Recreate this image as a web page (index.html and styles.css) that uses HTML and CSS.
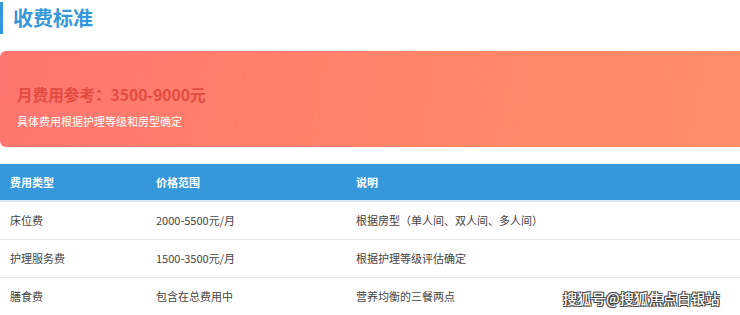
FILE: index.html
```html
<!DOCTYPE html>
<html lang="zh-CN">
<head>
<meta charset="utf-8">
<title>收费标准</title>
<link rel="stylesheet" href="styles.css">
</head>
<body>
<div class="page">
  <h2 class="section-title">收费标准</h2>
  <div class="price-card">
    <div class="price-main">月费用参考：3500-9000元</div>
    <div class="price-note">具体费用根据护理等级和房型确定</div>
  </div>
  <table class="fee-table">
    <colgroup>
      <col class="c1"><col class="c2"><col class="c3">
    </colgroup>
    <thead>
      <tr><th>费用类型</th><th>价格范围</th><th>说明</th></tr>
    </thead>
    <tbody>
      <tr><td>床位费</td><td>2000-5500元/月</td><td>根据房型（单人间、双人间、多人间）</td></tr>
      <tr><td>护理服务费</td><td>1500-3500元/月</td><td>根据护理等级评估确定</td></tr>
      <tr><td>膳食费</td><td>包含在总费用中</td><td>营养均衡的三餐两点</td></tr>
    </tbody>
  </table>
  <div class="watermark">搜狐号@搜狐焦点白银站</div>
</div>
</body>
</html>
```

FILE: styles.css
```css
* { box-sizing: border-box; }
html, body { margin: 0; padding: 0; background: #fff; }
body {
  font-family: "Noto Sans CJK SC", "Microsoft YaHei", sans-serif;
  color: #333;
  overflow: hidden;
}
.page { position: relative; width: 740px; height: 315px; overflow: hidden; }
.section-title {
  margin: 2px 0 0 0;
  padding-left: 10px;
  border-left: 3px solid #3498db;
  color: #3498db;
  font-size: 20px;
  font-weight: 700;
  line-height: 32px;
  height: 32px;
}
.price-card {
  margin-top: 17px;
  margin-right: -12px;
  height: 96px;
  border-radius: 6px;
  background: linear-gradient(100deg, #ff756f 0%, #ff8569 55%, #ff8e69 100%);
  padding: 31px 17px 0 17px;
}
.price-main {
  color: #e24b3f;
  font-size: 15.6px;
  font-weight: 700;
  line-height: 24px;
}
.price-note {
  margin-top: 7px;
  color: #fff;
  font-size: 11px;
  line-height: 16px;
}
.fee-table {
  margin-top: 17px;
  width: 740px;
  border-collapse: collapse;
  table-layout: fixed;
  font-size: 11px;
}
.c1 { width: 146px; }
.c2 { width: 200px; }
.fee-table th {
  background: #3498db;
  color: #fff;
  font-weight: 700;
  text-align: left;
  padding: 0 10px;
  height: 37px;
  border-bottom: 2px solid #d7e9f5;
}
.fee-table td {
  padding: 0 10px;
  height: 38px;
  color: #444;
  border-bottom: 1px solid #e8e8e8;
}
.watermark {
  position: absolute;
  left: 563px;
  top: 288px;
  font-size: 14px;
  line-height: 20px;
  font-weight: 500;
  color: #fff;
  letter-spacing: 0.3px;
  text-shadow: 1px 1px 0 #444, -1px -1px 0 #444, 1px -1px 0 #444, -1px 1px 0 #444;
}
```
